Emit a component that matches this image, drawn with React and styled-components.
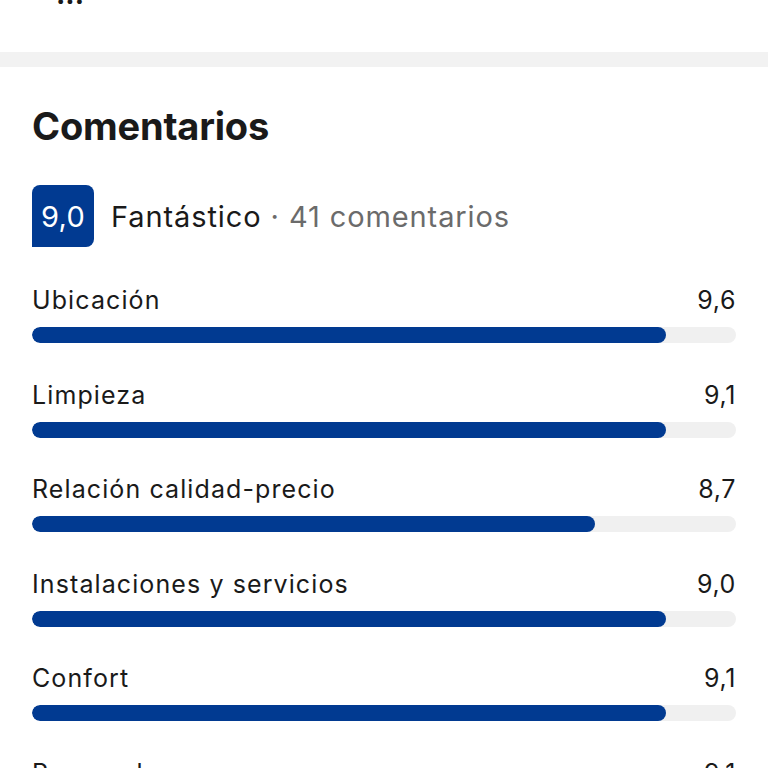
import React from "react";
import styled, { createGlobalStyle } from "styled-components";

const scores = [
    { label: "Ubicación", value: "9,6", fill: 90 },
    { label: "Limpieza", value: "9,1", fill: 90 },
    { label: "Relación calidad-precio", value: "8,7", fill: 80 },
    { label: "Instalaciones y servicios", value: "9,0", fill: 90 },
    { label: "Confort", value: "9,1", fill: 90 },
    { label: "Personal", value: "9,1", fill: 90 },
];

const App = () => {
    return (
        <>
            <GlobalStyle />
            <Page>
                <TopSection>
                    <Ellipsis>...</Ellipsis>
                </TopSection>
                <Divider />
                <ReviewsSection>
                    <Heading>Comentarios</Heading>
                    <Summary>
                        <ScoreBadge>9,0</ScoreBadge>
                        <SummaryText>
                            Fantástico <Muted>· 41 comentarios</Muted>
                        </SummaryText>
                    </Summary>
                    <ScoreList>
                        {scores.map((item) => (
                            <ScoreRow key={item.label}>
                                <ScoreHeader>
                                    <span>{item.label}</span>
                                    <span>{item.value}</span>
                                </ScoreHeader>
                                <Track>
                                    <Fill style={{ width: `${item.fill}%` }} />
                                </Track>
                            </ScoreRow>
                        ))}
                    </ScoreList>
                </ReviewsSection>
            </Page>
        </>
    );
};

export default App;

const GlobalStyle = createGlobalStyle`
    html, body {
        margin: 0;
        padding: 0;
        background: #ffffff;
        overflow: hidden;
    }

    * {
        box-sizing: border-box;
    }
`;

const Page = styled.div`
    width: 768px;
    height: 768px;
    overflow: hidden;
    font-family: "Inter", "Noto Sans", sans-serif;
    color: #1a1a1a;
    background: #ffffff;
`;

const TopSection = styled.div`
    height: 52px;
    padding: 0 56px;
    overflow: hidden;
`;

const Ellipsis = styled.div`
    margin-top: -18px;
    font-size: 28px;
    line-height: 24px;
    font-weight: 700;
    color: #1a1a1a;
`;

const Divider = styled.div`
    height: 15px;
    background: #f2f2f2;
`;

const ReviewsSection = styled.section`
    padding: 37px 32px 0 32px;
`;

const Heading = styled.h2`
    margin: 0;
    font-size: 38px;
    line-height: 44px;
    font-weight: 700;
    letter-spacing: -0.2px;
    color: #1a1a1a;
`;

const Summary = styled.div`
    margin-top: 37px;
    display: flex;
    align-items: center;
    gap: 17px;
`;

const ScoreBadge = styled.div`
    width: 62px;
    height: 62px;
    border-radius: 8px 8px 8px 0;
    background: #013a91;
    color: #ffffff;
    display: flex;
    align-items: center;
    justify-content: center;
    font-size: 29px;
    letter-spacing: 0.3px;
    font-weight: 400;
`;

const SummaryText = styled.div`
    font-size: 29px;
    letter-spacing: 0.9px;
    font-weight: 400;
    color: #1a1a1a;
`;

const Muted = styled.span`
    color: #6b6b6b;
`;

const ScoreList = styled.div`
    margin-top: 37px;
    display: flex;
    flex-direction: column;
    gap: 35.5px;
`;

const ScoreRow = styled.div`
    display: flex;
    flex-direction: column;
    gap: 11px;
`;

const ScoreHeader = styled.div`
    display: flex;
    justify-content: space-between;
    align-items: center;
    font-size: 25px;
    letter-spacing: 1.1px;
    line-height: 32px;
    color: #1a1a1a;

    span:last-child {
        letter-spacing: 0.6px;
    }
`;

const Track = styled.div`
    height: 16px;
    border-radius: 8px;
    background: #f0f0f0;
    overflow: hidden;
`;

const Fill = styled.div`
    height: 100%;
    border-radius: 8px;
    background: #013a91;
`;
